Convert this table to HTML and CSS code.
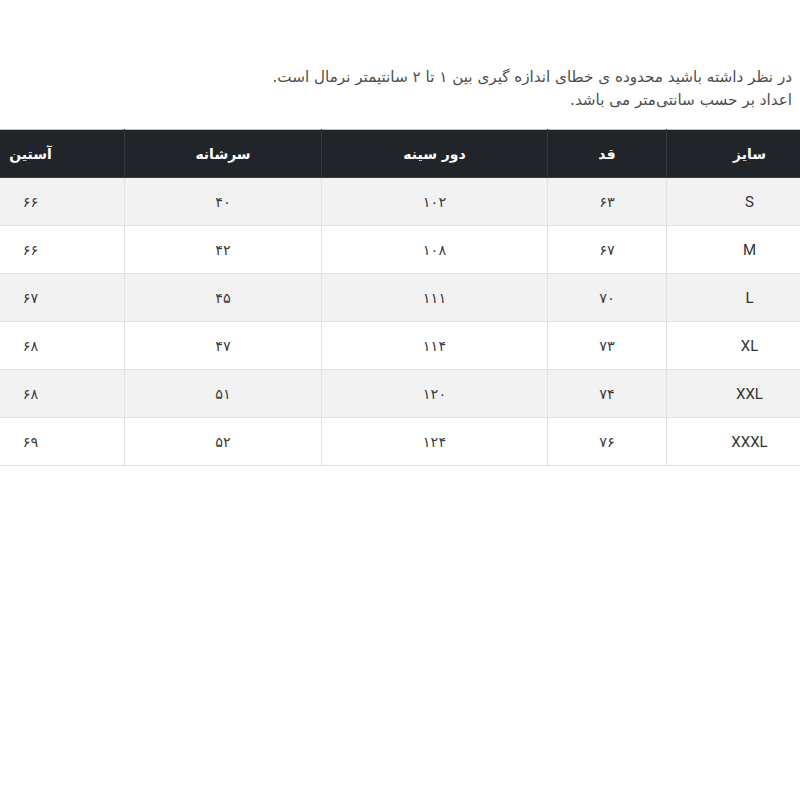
FILE: index.html
```html
<!DOCTYPE html>
<html lang="fa" dir="rtl">
<head>
<meta charset="utf-8">
<title>جدول سایز</title>
<link rel="stylesheet" href="styles.css">
</head>
<body>
<div class="page">
  <p class="note">در نظر داشته باشید محدوده ی خطای اندازه گیری بین ۱ تا ۲ سانتیمتر نرمال است.<br>اعداد بر حسب سانتی‌متر می باشد.</p>
  <div class="table-wrap">
    <table class="size-table">
      <colgroup>
        <col class="c-size">
        <col class="c-height">
        <col class="c-chest">
        <col class="c-shoulder">
        <col class="c-sleeve">
      </colgroup>
      <thead>
        <tr><th>سایز</th><th>قد</th><th>دور سینه</th><th>سرشانه</th><th>آستین</th></tr>
      </thead>
      <tbody>
        <tr><td class="lat">S</td><td>۶۳</td><td>۱۰۲</td><td>۴۰</td><td>۶۶</td></tr>
        <tr><td class="lat">M</td><td>۶۷</td><td>۱۰۸</td><td>۴۲</td><td>۶۶</td></tr>
        <tr><td class="lat">L</td><td>۷۰</td><td>۱۱۱</td><td>۴۵</td><td>۶۷</td></tr>
        <tr><td class="lat">XL</td><td>۷۳</td><td>۱۱۴</td><td>۴۷</td><td>۶۸</td></tr>
        <tr><td class="lat">XXL</td><td>۷۴</td><td>۱۲۰</td><td>۵۱</td><td>۶۸</td></tr>
        <tr><td class="lat">XXXL</td><td>۷۶</td><td>۱۲۴</td><td>۵۲</td><td>۶۹</td></tr>
      </tbody>
    </table>
  </div>
</div>
</body>
</html>
```

FILE: styles.css
```css
html, body {
  margin: 0;
  padding: 0;
  background: #ffffff;
}
body {
  font-family: "DejaVu Sans", sans-serif;
  color: #212529;
}
.page {
  width: 800px;
  height: 800px;
  overflow: hidden;
  padding-top: 66px;
  box-sizing: border-box;
}
.note {
  margin: 0 8px 17px 0;
  font-size: 15.2px;
  line-height: 23px;
  color: #4d4d4d;
}
.table-wrap {
  margin-right: -33px;
}
.size-table {
  width: 896px;
  table-layout: fixed;
  border-collapse: collapse;
  margin-left: -63px;
}
.c-size { width: 166px; }
.c-height { width: 119px; }
.c-chest { width: 226px; }
.c-shoulder { width: 197px; }
.c-sleeve { width: 188px; }
.size-table th,
.size-table td {
  height: 48px;
  padding: 0 12px;
  box-sizing: border-box;
  text-align: center;
  vertical-align: middle;
  font-size: 14px;
  line-height: 24px;
}
.size-table th {
  background: #212529;
  color: #ffffff;
  font-weight: bold;
  border: 1px solid #32383e;
  border-top-color: #b8bcc0;
}
.size-table td {
  border: 1px solid #dee2e6;
  color: #3d3d3d;
  font-size: 14.5px;
}
.size-table tbody tr:nth-child(odd) td {
  background: #f2f2f2;
}
.size-table td.lat {
  font-family: Roboto, "DejaVu Sans", sans-serif;
  font-size: 15px;
  color: #333333;
}
```
